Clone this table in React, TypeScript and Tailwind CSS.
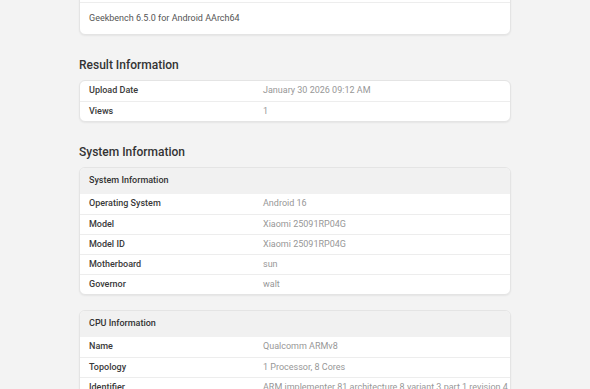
const font = { fontFamily: "Roboto, 'Liberation Sans', sans-serif" };

type Row = [string, string];

function Heading({ children }: { children: string }) {
  return (
    <h2 className="mt-[20px] mb-[5px] text-[12px] leading-[20px] font-medium text-[#333]">
      {children}
    </h2>
  );
}

function InfoCard({ title, rows }: { title?: string; rows: Row[] }) {
  return (
    <div className="rounded-[6px] border border-[#e4e4e4] bg-white shadow-[0_1px_2px_rgba(0,0,0,0.06)] overflow-hidden">
      {title && (
        <div className="h-[26px] flex items-center px-[9px] bg-[#f1f1f1] text-[9px] font-medium text-[#333]">
          {title}
        </div>
      )}
      {rows.map(([label, value], i) => (
        <div
          key={label}
          className={`h-[20px] flex items-center px-[9px] text-[9px] ${i > 0 ? "border-t border-[#ededed]" : ""}`}
        >
          <div className="w-[174px] shrink-0 font-medium text-[#3a3a3a]">{label}</div>
          <div className="text-[#979797] whitespace-nowrap">{value}</div>
        </div>
      ))}
    </div>
  );
}

export default function App() {
  return (
    <div className="w-[590px] h-[389px] overflow-hidden bg-[#f3f3f3]" style={font}>
      <div className="w-[432px] ml-[79px]">
        <div className="-mt-[31px] rounded-[6px] border border-[#e4e4e4] bg-white shadow-[0_1px_2px_rgba(0,0,0,0.06)] overflow-hidden">
          <div className="h-[32px]" />
          <div className="h-[32px] flex items-center px-[9px] border-t border-[#ededed] text-[9px] text-[#555]">
            Geekbench 6.5.0 for Android AArch64
          </div>
        </div>

        <Heading>Result Information</Heading>
        <InfoCard
          rows={[
            ["Upload Date", "January 30 2026 09:12 AM"],
            ["Views", "1"],
          ]}
        />

        <Heading>System Information</Heading>
        <InfoCard
          title="System Information"
          rows={[
            ["Operating System", "Android 16"],
            ["Model", "Xiaomi 25091RP04G"],
            ["Model ID", "Xiaomi 25091RP04G"],
            ["Motherboard", "sun"],
            ["Governor", "walt"],
          ]}
        />

        <div className="mt-[15px]">
          <InfoCard
            title="CPU Information"
            rows={[
              ["Name", "Qualcomm ARMv8"],
              ["Topology", "1 Processor, 8 Cores"],
              ["Identifier", "ARM implementer 81 architecture 8 variant 3 part 1 revision 4"],
            ]}
          />
        </div>
      </div>
    </div>
  );
}
